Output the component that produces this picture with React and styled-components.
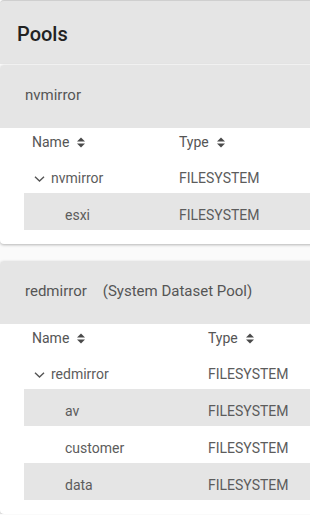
import React from 'react'
import styled, { createGlobalStyle } from 'styled-components'

const Global = createGlobalStyle`
  html, body {
    margin: 0;
    padding: 0;
    background: #fafafa;
    overflow: hidden;
    font-family: Roboto, "Liberation Sans", sans-serif;
  }
`

const pools = [
  {
    name: 'nvmirror',
    note: '',
    nameWidth: 147,
    root: 'nvmirror',
    children: ['esxi'],
  },
  {
    name: 'redmirror',
    note: '(System Dataset Pool)',
    nameWidth: 176,
    root: 'redmirror',
    children: ['av', 'customer', 'data'],
  },
]

function SortIcon() {
  return (
    <SortSvg viewBox="0 0 8 11" width="8" height="11">
      <path d="M0 4.6 L4 0.4 L8 4.6 Z" fill="#4a4a4a" />
      <path d="M0 6.4 L4 10.6 L8 6.4 Z" fill="#4a4a4a" />
    </SortSvg>
  )
}

function Chevron() {
  return (
    <ChevronSvg viewBox="0 0 11 6" width="11" height="6">
      <polyline points="1,0.8 5.5,5 10,0.8" fill="none" stroke="#555" strokeWidth="1.4" />
    </ChevronSvg>
  )
}

function PoolCard({ pool }) {
  return (
    <Card>
      <CardHeader>
        <span>{pool.name}</span>
        {pool.note && <span>{pool.note}</span>}
      </CardHeader>
      <Table>
        <HeadRow>
          <Cell width={pool.nameWidth}>
            Name <SortIcon />
          </Cell>
          <Cell>
            Type <SortIcon />
          </Cell>
        </HeadRow>
        <Row>
          <Cell width={pool.nameWidth}>
            <Chevron />
            {pool.root}
          </Cell>
          <Cell>FILESYSTEM</Cell>
        </Row>
        {pool.children.map((c, i) => (
          <Row key={c} $shaded={i % 2 === 0}>
            <Cell width={pool.nameWidth} $indent>
              {c}
            </Cell>
            <Cell>FILESYSTEM</Cell>
          </Row>
        ))}
      </Table>
    </Card>
  )
}

export default function App() {
  return (
    <Page>
      <Global />
      <TitleBar>Pools</TitleBar>
      <Cards>
        {pools.map((p) => (
          <PoolCard key={p.name} pool={p} />
        ))}
      </Cards>
    </Page>
  )
}

const Page = styled.div`
  width: calc(100% + 30px);
  display: flex;
  flex-direction: column;
`

const TitleBar = styled.div`
  height: 64px;
  box-sizing: border-box;
  border-top: 1px solid #cfcfcf;
  background: #e5e5e5;
  border-top-left-radius: 4px;
  padding: 2px 17px 0;
  display: flex;
  align-items: center;
  font-size: 20px;
  font-weight: 500;
  color: #222;
`

const Cards = styled.div`
  display: flex;
  flex-direction: column;
  gap: 17px;
  margin-top: 1px;
`

const Card = styled.div`
  background: #fff;
  border-radius: 4px;
  box-shadow: 0 1px 3px rgba(0, 0, 0, 0.28);
  padding-bottom: 14px;
`

const CardHeader = styled.div`
  height: 63px;
  background: #e5e5e5;
  border-radius: 4px 4px 0 0;
  padding: 0 25px 4px;
  box-sizing: border-box;
  display: flex;
  align-items: center;
  gap: 16px;
  font-size: 15px;
  color: #555;
`

const Table = styled.div`
  margin-left: 24px;
  display: flex;
  flex-direction: column;
  font-size: 14px;
  color: #5c5c5c;
`

const HeadRow = styled.div`
  height: 28px;
  display: flex;
  align-items: center;
  color: #555;
`

const Row = styled.div`
  height: 37px;
  box-sizing: border-box;
  padding-top: 7px;
  display: flex;
  align-items: center;
  background: ${(p) => (p.$shaded ? '#e5e5e5' : 'transparent')};
`

const Cell = styled.div`
  display: flex;
  align-items: center;
  box-sizing: border-box;
  width: ${(p) => (p.width ? `${p.width}px` : 'auto')};
  padding-left: ${(p) => (p.$indent ? '41px' : '8px')};
`

const SortSvg = styled.svg`
  margin-left: 8px;
`

const ChevronSvg = styled.svg`
  margin: 1px 6px 0 2px;
`
